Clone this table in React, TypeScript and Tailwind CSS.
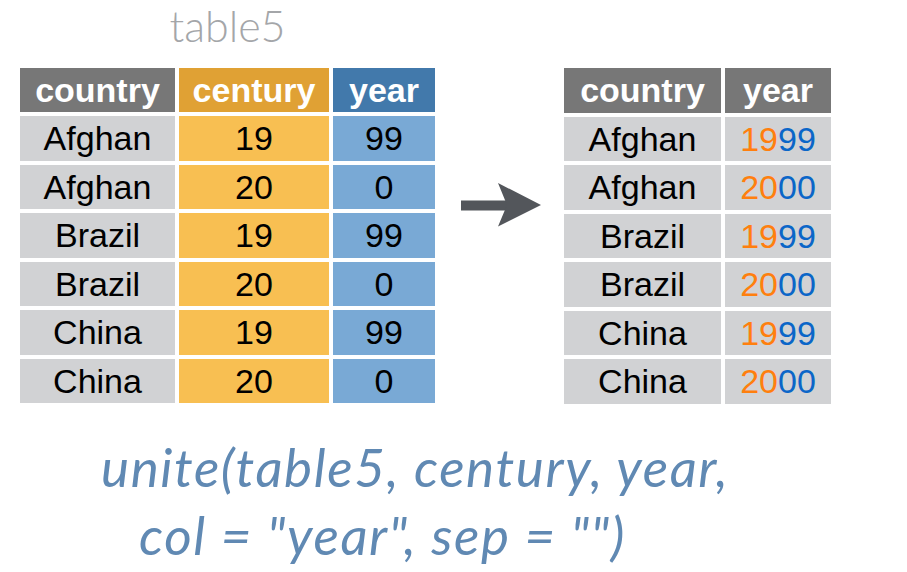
import React from "react";

type Row = { country: string; century: string; year: string };

const rows: Row[] = [
  { country: "Afghan", century: "19", year: "99" },
  { country: "Afghan", century: "20", year: "0" },
  { country: "Brazil", century: "19", year: "99" },
  { country: "Brazil", century: "20", year: "0" },
  { country: "China", century: "19", year: "99" },
  { country: "China", century: "20", year: "0" },
];

const cell =
  "h-[44.5px] flex items-center justify-center leading-[44.5px] text-[34px]";

function Arrow() {
  return (
    <svg width="80" height="44" viewBox="0 0 80 44" className="block">
      <rect x="0" y="17.5" width="47" height="10" fill="#53565b" />
      <polygon points="37,0 80,22 37,43.5 46,22" fill="#53565b" />
    </svg>
  );
}

export default function App() {
  return (
    <div className="w-[907px] h-[572px] bg-white overflow-hidden font-['Liberation_Sans',Arial,sans-serif]">
      <div className="flex items-start pl-[20px]">
        {/* source table */}
        <div className="flex flex-col">
          <div className="mb-[16.4px] h-[51.6px] text-center text-[43px] leading-[1.2] font-light text-[#a4a6a9] font-['Lato',sans-serif]">
            table5
          </div>
          <div className="grid grid-cols-[155px_150px_102px] gap-x-[4px] gap-y-[4px] text-black">
            <div className={`${cell} bg-[#777777] text-white font-bold`}>country</div>
            <div className={`${cell} bg-[#e0a134] text-white font-bold`}>century</div>
            <div className={`${cell} bg-[#4279ab] text-white font-bold`}>year</div>
            {rows.map((r, i) => (
              <React.Fragment key={i}>
                <div className={`${cell} bg-[#d1d2d4]`}>{r.country}</div>
                <div className={`${cell} bg-[#f8bf52]`}>{r.century}</div>
                <div className={`${cell} bg-[#79a9d5]`}>{r.year}</div>
              </React.Fragment>
            ))}
          </div>
        </div>

        <div className="ml-[26px] mt-[183px]">
          <Arrow />
        </div>

        {/* united table */}
        <div className="ml-[23px] mt-[68px] grid grid-cols-[157px_106px] gap-x-[4px] gap-y-[4px] text-black">
          <div className={`${cell} bg-[#777777] text-white font-bold`}>country</div>
          <div className={`${cell} bg-[#777777] text-white font-bold`}>year</div>
          {rows.map((r, i) => (
            <React.Fragment key={i}>
              <div className={`${cell} bg-[#d1d2d4]`}>{r.country}</div>
              <div className={`${cell} bg-[#d1d2d4]`}>
                <span className="text-[#ff7f0e]">{r.century}</span>
                <span className="text-[#0b66c8]">{r.year === "0" ? "00" : r.year}</span>
              </div>
            </React.Fragment>
          ))}
        </div>
      </div>

      <div className="mt-[29px] pl-[101px] text-[53px] leading-[68px] tracking-[0.03em] italic font-normal text-[#6089b3] font-['Lato',sans-serif] whitespace-pre">
        <div>unite(table5, century, year,</div>
        <div className="pl-[38px]">col = "year", sep = "")</div>
      </div>
    </div>
  );
}
